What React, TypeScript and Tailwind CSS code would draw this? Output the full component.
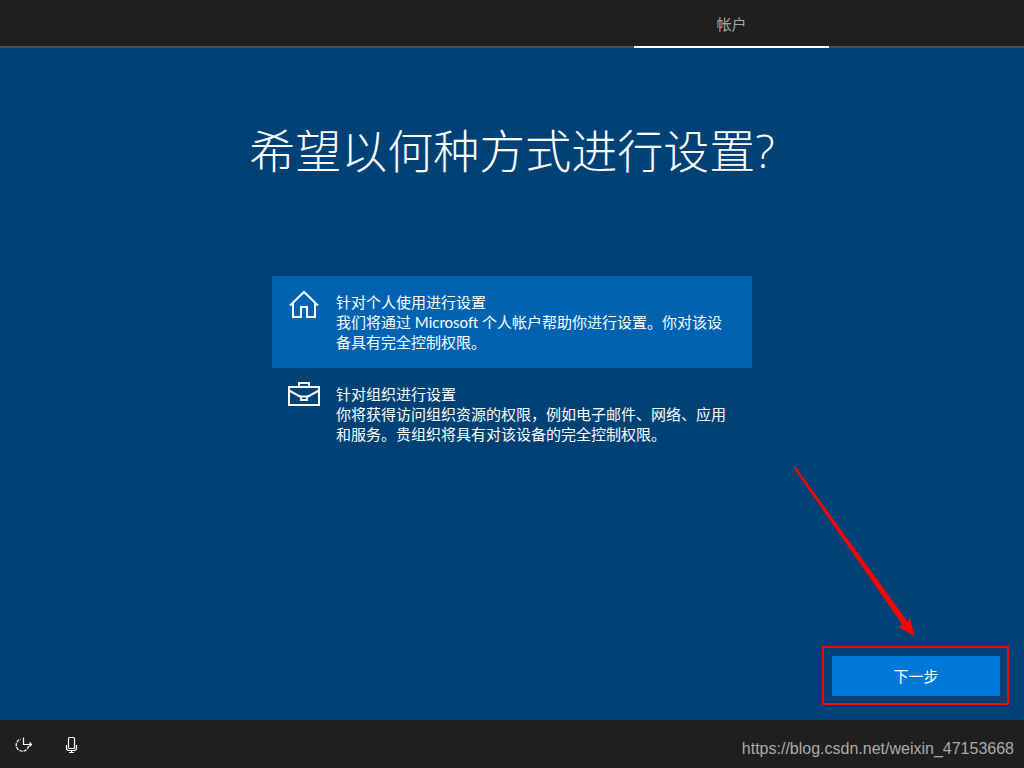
function HomeIcon() {
  return (
    <svg aria-hidden="true" viewBox="0 0 32 32" className="size-8" fill="none" stroke="currentColor" strokeWidth="2">
      <path d="M2 17.500 16 4l14 13.500" />
      <path d="M5 15v14h8V19h6v10h8V15" />
    </svg>
  );
}

function BriefcaseIcon() {
  return (
    <svg aria-hidden="true" viewBox="0 0 32 32" className="size-8" fill="none" stroke="currentColor" strokeWidth="2">
      <path d="M1 7h30v18H1z" />
      <path d="M11 7V3h10v4" />
      <path d="m1 10.500 12 6.500M31 10.500 19 17" />
      <path d="M13 16.500h6v3.500h-6z" strokeWidth="1.800" />
    </svg>
  );
}

function EaseOfAccessIcon() {
  return (
    <svg aria-hidden="true" viewBox="0 0 24 24" className="size-6" fill="none" stroke="currentColor">
      <path d="M16.500 14A6.200 6.200 0 1 1 8.500 7.100" strokeWidth="1.300" strokeDasharray="3.200 1" />
      <path d="M11.500 5.500v7h8" strokeWidth="1.200" />
      <path d="m17.500 10.500 2 2-2 2" strokeWidth="1.200" />
    </svg>
  );
}

function MicIcon() {
  return (
    <svg aria-hidden="true" viewBox="0 0 24 24" className="size-6" fill="none" stroke="currentColor" strokeWidth="1.200">
      <rect x="8.500" y="5.500" width="6" height="11" rx="1" />
      <path d="M6.500 13v3q0 2.500 2.500 2.500h5q2.500 0 2.500-2.500v-3M11.500 18.500v2M9 20.500h5" />
    </svg>
  );
}

const options = [
  {
    id: "personal",
    icon: <HomeIcon />,
    title: "针对个人使用进行设置",
    text: "我们将通过 Microsoft 个人帐户帮助你进行设置。你对该设备具有完全控制权限。",
  },
  {
    id: "organization",
    icon: <BriefcaseIcon />,
    title: "针对组织进行设置",
    text: "你将获得访问组织资源的权限，例如电子邮件、网络、应用和服务。贵组织将具有对该设备的完全控制权限。",
  },
];

export default function App() {
  return (
    <div
      lang="zh-CN"
      className="flex min-h-screen flex-col bg-[#004275] font-['Lato','Noto_Sans_CJK_SC',sans-serif] text-[15px] leading-5 text-white"
    >
      <header className="flex h-12 justify-end bg-[#1f1f1f] pr-[195px] shadow-[inset_0_-2px_0_#4c4c4c]">
        <div className="flex w-[195px] items-center justify-center border-b-2 border-white pt-0.5 text-[#a6a6a6]">
          帐户
        </div>
      </header>

      <main className="flex grow flex-col items-center">
        <h1 className="mt-[70px] text-center font-['Open_Sans','Noto_Sans_CJK_SC',sans-serif] text-[46px] leading-[64px] font-light">
          希望以何种方式进行设置?
        </h1>

        <fieldset className="mt-[94px] w-full max-w-[480px]">
          {options.map((o, i) => (
            <label key={o.id} className="flex cursor-pointer gap-4 p-4 pt-3 has-checked:bg-[#0063b1]">
              <input type="radio" name="setup" value={o.id} defaultChecked={i === 0} className="sr-only" />
              <span className="shrink-0">{o.icon}</span>
              <span className="grow pt-1">
                <span className="block">{o.title}</span>
                <span className="block">{o.text}</span>
              </span>
            </label>
          ))}
        </fieldset>

        <div className="relative mt-auto mr-[15px] mb-[15px] self-end border-2 border-[#ff0000] p-2 pr-[7px] pb-[7px]">
          <button type="button" className="h-10 w-[168px] bg-[#0078d7]">
            下一步
          </button>
          <svg
            aria-hidden="true"
            viewBox="0 0 124 172"
            className="pointer-events-none absolute right-[90px] bottom-[65px] h-[172px] w-[124px]"
            fill="#ff0000"
          >
            <path d="M.8 2 2.500 1 115 156.200 116.800 151.500 121.500 170.300 105.500 161 109.800 159.300Z" />
          </svg>
        </div>
      </main>

      <footer className="flex h-12 items-center justify-between bg-[#1f1f1f] pr-[10px] pl-3">
        <div className="flex gap-6">
          <button type="button" aria-label="轻松使用">
            <EaseOfAccessIcon />
          </button>
          <button type="button" aria-label="麦克风">
            <MicIcon />
          </button>
        </div>
        <a
          href="https://blog.csdn.net/weixin_47153668"
          className="pt-[10px] font-['Liberation_Sans',sans-serif] text-base text-[#acacac]"
        >
          https://blog.csdn.net/weixin_47153668
        </a>
      </footer>
    </div>
  );
}
